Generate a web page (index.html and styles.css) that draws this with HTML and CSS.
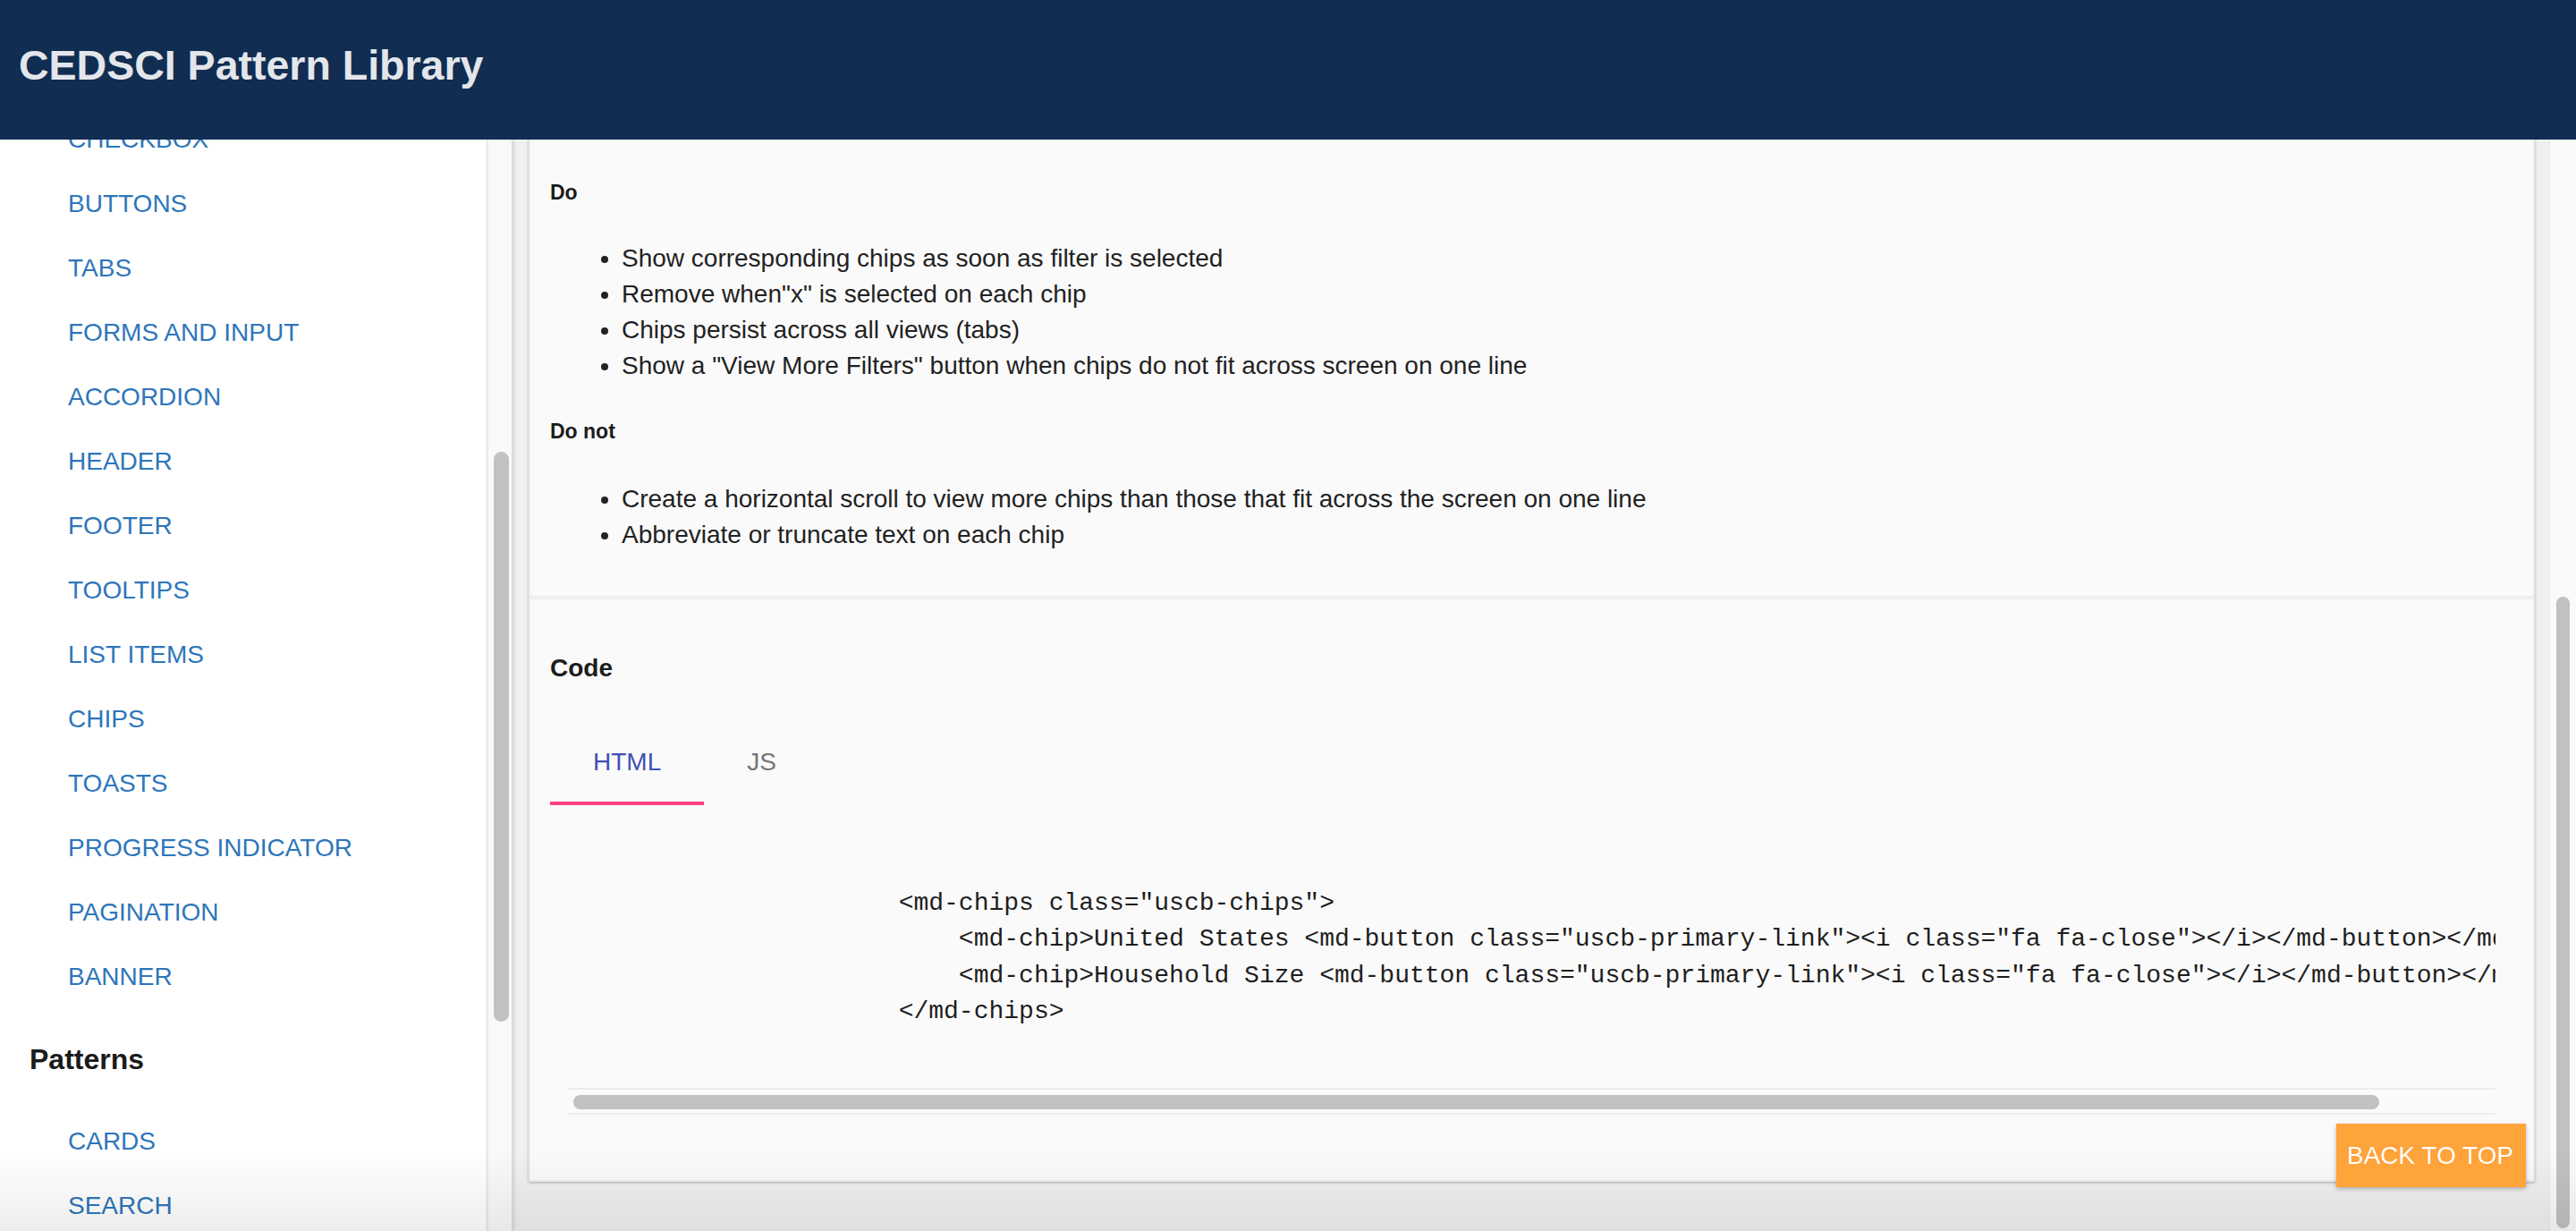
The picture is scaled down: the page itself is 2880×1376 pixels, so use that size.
FILE: index.html
```html
<!DOCTYPE html>
<html lang="en">
<head>
<meta charset="utf-8">
<title>CEDSCI Pattern Library</title>
<link rel="stylesheet" href="styles.css">
</head>
<body>
<header class="topbar">
  <h1 class="brand">CEDSCI Pattern Library</h1>
</header>
<div class="layout">
  <aside class="sidebar">
    <nav class="nav">
      <a class="nav-item">CHECKBOX</a>
      <a class="nav-item">BUTTONS</a>
      <a class="nav-item">TABS</a>
      <a class="nav-item">FORMS AND INPUT</a>
      <a class="nav-item">ACCORDION</a>
      <a class="nav-item">HEADER</a>
      <a class="nav-item">FOOTER</a>
      <a class="nav-item">TOOLTIPS</a>
      <a class="nav-item">LIST ITEMS</a>
      <a class="nav-item">CHIPS</a>
      <a class="nav-item">TOASTS</a>
      <a class="nav-item">PROGRESS INDICATOR</a>
      <a class="nav-item">PAGINATION</a>
      <a class="nav-item">BANNER</a>
      <h3 class="nav-heading">Patterns</h3>
      <a class="nav-item">CARDS</a>
      <a class="nav-item">SEARCH</a>
    </nav>
  </aside>
  <div class="side-scroll"><div class="side-thumb"></div></div>
  <main class="main">
    <section class="card">
      <div class="guidelines">
        <h5 class="guide-title">Do</h5>
        <ul class="guide-list">
          <li>Show corresponding chips as soon as filter is selected</li>
          <li>Remove when"x" is selected on each chip</li>
          <li>Chips persist across all views (tabs)</li>
          <li>Show a "View More Filters" button when chips do not fit across screen on one line</li>
        </ul>
        <h5 class="guide-title">Do not</h5>
        <ul class="guide-list guide-list-last">
          <li>Create a horizontal scroll to view more chips than those that fit across the screen on one line</li>
          <li>Abbreviate or truncate text on each chip</li>
        </ul>
      </div>
      <div class="code-section">
        <h4 class="code-title">Code</h4>
        <div class="tabs">
          <div class="tab tab-active">HTML</div>
          <div class="tab">JS</div>
        </div>
        <pre class="code">                      &lt;md-chips class="uscb-chips"&gt;
                          &lt;md-chip&gt;United States &lt;md-button class="uscb-primary-link"&gt;&lt;i class="fa fa-close"&gt;&lt;/i&gt;&lt;/md-button&gt;&lt;/md-chip&gt;
                          &lt;md-chip&gt;Household Size &lt;md-button class="uscb-primary-link"&gt;&lt;i class="fa fa-close"&gt;&lt;/i&gt;&lt;/md-button&gt;&lt;/md-chip&gt;
                      &lt;/md-chips&gt;</pre>
        <div class="hscroll"><div class="hscroll-thumb"></div></div>
      </div>
    </section>
  </main>
  <div class="page-scroll"><div class="page-thumb"></div></div>
</div>
<div class="bottom-fade"></div>
<a class="back-top">BACK TO TOP</a>
</body>
</html>
```

FILE: styles.css
```css
* { box-sizing: border-box; }

html, body {
  margin: 0;
  padding: 0;
  width: 2880px;
  height: 1376px;
  overflow: hidden;
  background: #f0f0f0;
  font-family: "Liberation Sans", Arial, sans-serif;
  color: #212121;
}

.topbar {
  height: 156px;
  background: #112d52;
  display: flex;
  align-items: center;
  padding: 0 0 8px 21px;
  position: relative;
  z-index: 3;
}

.brand {
  margin: 0;
  font-size: 46.5px;
  font-weight: bold;
  color: #e3e6eb;
  line-height: 1.15;
}

.layout {
  display: flex;
  height: 1220px;
}

.sidebar {
  width: 544px;
  flex: 0 0 544px;
  background: #ffffff;
  overflow: hidden;
}

.nav {
  display: flex;
  flex-direction: column;
  margin-top: -36px;
}

.nav-item {
  display: block;
  height: 72px;
  line-height: 72px;
  padding-left: 76px;
  font-size: 28px;
  color: #2e76ba;
  text-decoration: none;
  white-space: nowrap;
}

.nav-heading {
  margin: 0;
  height: 112px;
  line-height: 112px;
  padding-left: 33px;
  font-size: 32px;
  font-weight: bold;
  color: #1b1b1b;
}

.side-scroll {
  flex: 0 0 28px;
  background: #f9f9f9;
  border-left: 2px solid #e8e8e8;
  padding: 349px 0 0 6px;
  box-shadow: 2px 0 5px rgba(0, 0, 0, 0.14);
  position: relative;
  z-index: 1;
}

.side-thumb {
  width: 17px;
  height: 637px;
  border-radius: 9px;
  background: #c1c1c1;
}

.main {
  flex: 1 1 auto;
  background: #f0f0f0;
  overflow: hidden;
}

.card {
  margin: -40px 16px 0 19px;
  background: #fafafa;
  border: 2px solid #ececec;
  box-shadow: 0 1px 3px rgba(0, 0, 0, 0.28);
}

.guidelines {
  padding: 84px 22px 48px;
}

.guide-title {
  margin: 0 0 41px;
  font-size: 23px;
  line-height: 26px;
  font-weight: bold;
  color: #1c1c1c;
}

.guide-list {
  margin: 0 0 40px;
  padding-left: 80px;
  font-size: 28px;
  line-height: 40px;
  color: #222222;
}

.guide-list-last {
  margin: 43px 0 0;
}

.guide-list + .guide-title { margin-bottom: 0; }

.code-section {
  border-top: 4px solid #efefef;
  padding: 61px 22px 73px;
}

.code-title {
  margin: 0 0 41px;
  font-size: 28px;
  line-height: 32px;
  font-weight: bold;
  color: #1c1c1c;
}

.tabs {
  display: flex;
  height: 96px;
}

.tab {
  padding: 0 48px;
  height: 96px;
  line-height: 96px;
  font-size: 28px;
  color: #757575;
}

.tab-active {
  color: #3f51b5;
  box-shadow: inset 0 -4px 0 #ff4081;
}

.code {
  margin: 0 20px;
  padding: 90px 0 65px;
  overflow: hidden;
  white-space: pre;
  font-family: "Liberation Mono", "Courier New", monospace;
  font-size: 28px;
  line-height: 40.3px;
  color: #1e1e1e;
}

.hscroll {
  margin: 0 20px;
  height: 30px;
  border-top: 2px solid #ececec;
  border-bottom: 2px solid #ececec;
  padding: 6px 0 0 6px;
}

.hscroll-thumb {
  width: 2019px;
  height: 16px;
  border-radius: 8px;
  background: #c1c1c1;
}

.page-scroll {
  flex: 0 0 30px;
  background: #fafafa;
  border-left: 1px solid #e5e5e5;
  padding: 511px 0 0 7px;
}

.page-thumb {
  width: 15px;
  height: 706px;
  border-radius: 8px;
  background: #c1c1c1;
}

.bottom-fade {
  position: fixed;
  left: 0;
  right: 0;
  bottom: 0;
  height: 90px;
  background: linear-gradient(to bottom, rgba(0, 0, 0, 0), rgba(0, 0, 0, 0.065));
  pointer-events: none;
  z-index: 4;
}

.back-top {
  position: fixed;
  right: 56px;
  bottom: 49px;
  height: 71px;
  line-height: 71px;
  padding: 0 14px 0 12px;
  background: #ffa33b;
  color: #ffffff;
  font-size: 28px;
  box-shadow: 0 2px 5px rgba(0, 0, 0, 0.26);
  z-index: 5;
  text-decoration: none;
}
```
